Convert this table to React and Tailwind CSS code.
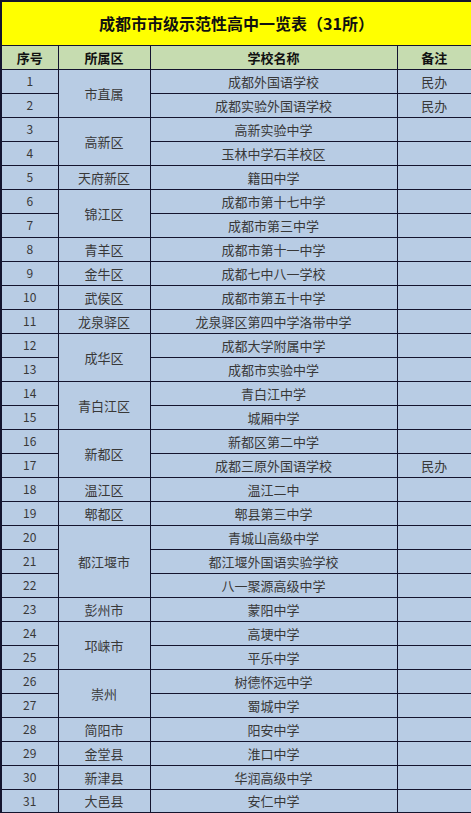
import React from "react";

const rows = [
  { n: 1, d: "市直属", span: 2, s: "成都外国语学校", r: "民办" },
  { n: 2, s: "成都实验外国语学校", r: "民办" },
  { n: 3, d: "高新区", span: 2, s: "高新实验中学" },
  { n: 4, s: "玉林中学石羊校区" },
  { n: 5, d: "天府新区", span: 1, s: "籍田中学" },
  { n: 6, d: "锦江区", span: 2, s: "成都市第十七中学" },
  { n: 7, s: "成都市第三中学" },
  { n: 8, d: "青羊区", span: 1, s: "成都市第十一中学" },
  { n: 9, d: "金牛区", span: 1, s: "成都七中八一学校" },
  { n: 10, d: "武侯区", span: 1, s: "成都市第五十中学" },
  { n: 11, d: "龙泉驿区", span: 1, s: "龙泉驿区第四中学洛带中学" },
  { n: 12, d: "成华区", span: 2, s: "成都大学附属中学" },
  { n: 13, s: "成都市实验中学" },
  { n: 14, d: "青白江区", span: 2, s: "青白江中学" },
  { n: 15, s: "城厢中学" },
  { n: 16, d: "新都区", span: 2, s: "新都区第二中学" },
  { n: 17, s: "成都三原外国语学校", r: "民办" },
  { n: 18, d: "温江区", span: 1, s: "温江二中" },
  { n: 19, d: "郫都区", span: 1, s: "郫县第三中学" },
  { n: 20, d: "都江堰市", span: 3, s: "青城山高级中学" },
  { n: 21, s: "都江堰外国语实验学校" },
  { n: 22, s: "八一聚源高级中学" },
  { n: 23, d: "彭州市", span: 1, s: "蒙阳中学" },
  { n: 24, d: "邛崃市", span: 2, s: "高埂中学" },
  { n: 25, s: "平乐中学" },
  { n: 26, d: "崇州", span: 2, s: "树德怀远中学" },
  { n: 27, s: "蜀城中学" },
  { n: 28, d: "简阳市", span: 1, s: "阳安中学" },
  { n: 29, d: "金堂县", span: 1, s: "淮口中学" },
  { n: 30, d: "新津县", span: 1, s: "华润高级中学" },
  { n: 31, d: "大邑县", span: 1, s: "安仁中学" },
];

const cell = "border border-[#14142e] text-center align-middle p-0 leading-none";

export default function App() {
  return (
    <div
      className="w-[471px] h-[813px] bg-white overflow-hidden"
      style={{ fontFamily: '"Noto Sans CJK SC", "Noto Sans", sans-serif' }}
    >
      <table className="w-[471px] table-fixed border-collapse border-2 border-[#14142e]">
        <colgroup>
          <col className="w-[57px]" />
          <col className="w-[92px]" />
          <col className="w-[247px]" />
          <col className="w-[75px]" />
        </colgroup>
        <thead>
          <tr className="h-[44px] bg-[#ffff00]">
            <th colSpan={4} className={`${cell} text-[16px] font-bold text-[#111]`}>
              成都市市级示范性高中一览表（31所）
            </th>
          </tr>
          <tr className="h-[24px] bg-[#c6dcb0] text-[13px] font-bold text-[#111]">
            <th className={cell}>序号</th>
            <th className={cell}>所属区</th>
            <th className={cell}>学校名称</th>
            <th className={cell}>备注</th>
          </tr>
        </thead>
        <tbody className="bg-[#b8cce4] text-[13px] text-[#383838]">
          {rows.map((row) => (
            <tr key={row.n} className="h-[24px]">
              <td className={`${cell} text-[12px]`}>{row.n}</td>
              {row.d && (
                <td rowSpan={row.span} className={cell}>
                  {row.d}
                </td>
              )}
              <td className={cell}>{row.s}</td>
              <td className={cell}>{row.r || ""}</td>
            </tr>
          ))}
        </tbody>
      </table>
    </div>
  );
}
